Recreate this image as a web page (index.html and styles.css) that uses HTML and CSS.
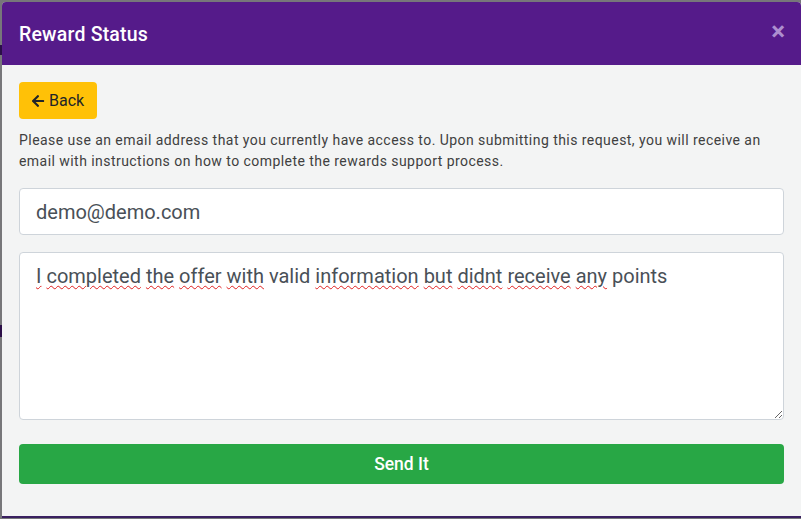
FILE: index.html
```html
<!DOCTYPE html>
<html lang="en">
<head>
<meta charset="utf-8">
<title>Reward Status</title>
<link rel="stylesheet" href="styles.css">
</head>
<body>
<div class="backdrop-strip strip-a"></div>
<div class="backdrop-strip strip-b"></div>
<div class="modal">
  <div class="modal-header">
    <h5 class="modal-title">Reward Status</h5>
    <span class="close" aria-label="Close">&times;</span>
  </div>
  <div class="modal-body">
    <button class="btn-back" type="button">
      <svg class="arrow" viewBox="0 0 448 512" width="14" height="14" aria-hidden="true"><path fill="currentColor" d="M257.5 445.1l-22.2 22.2c-9.4 9.4-24.6 9.4-33.9 0L7 273c-9.4-9.4-9.4-24.6 0-33.9L201.4 44.7c9.4-9.4 24.6-9.4 33.9 0l22.2 22.2c9.5 9.5 9.3 25-.4 34.3L136.6 216H424c13.3 0 24 10.7 24 24v32c0 13.3-10.7 24-24 24H136.6l120.5 114.8c9.8 9.3 10 24.8.4 34.3z"/></svg>
      <span>Back</span>
    </button>
    <p class="info">Please use an email address that you currently have access to. Upon submitting this request, you will receive an email with instructions on how to complete the rewards support process.</p>
    <input class="field" type="email" value="demo@demo.com">
    <div class="field area" role="textbox"><span class="sp">I</span> <span class="sp">completed</span> <span class="sp">the</span> <span class="sp">offer</span> <span class="sp">with</span> valid <span class="sp">information</span> <span class="sp">but</span> <span class="sp">didnt</span> <span class="sp">receive</span> <span class="sp">any</span> points</div>
    <button class="btn-send" type="button">Send It</button>
  </div>
</div>
</body>
</html>
```
FILE: styles.css
```css
html, body {
  margin: 0;
  padding: 0;
}
body {
  width: 801px;
  height: 519px;
  background: #77777a;
  font-family: Roboto, "Liberation Sans", Arial, sans-serif;
  position: relative;
  overflow: hidden;
}
.backdrop-strip {
  position: absolute;
  left: 0;
  width: 3px;
  background: #2b0f48;
}
.strip-a { top: 45px; height: 10px; }
.strip-b { top: 325px; height: 12px; }
.modal {
  position: absolute;
  left: 2px;
  top: 2px;
  width: 799px;
  height: 514px;
  background: #f3f4f4;
  border-radius: 4px 4px 0 0;
  border-bottom: 2px solid #3a2060;
  overflow: hidden;
}
.modal-header {
  height: 63px;
  background: #551b8a;
  display: flex;
  align-items: center;
  justify-content: space-between;
  padding: 0 17px;
  box-sizing: border-box;
}
.modal-title {
  margin: 0;
  color: #fff;
  font-size: 19.5px;
  font-weight: 500;
  letter-spacing: 0.2px;
  padding-top: 1px;
}
.close {
  color: #ad8fcf;
  font-size: 26px;
  font-weight: 700;
  line-height: 1;
  margin-right: -1px;
  margin-top: -6px;
}
.modal-body {
  padding: 17px 17px 0 17px;
  display: flex;
  flex-direction: column;
  align-items: flex-start;
}
.btn-back {
  background: #ffc107;
  border: 0;
  border-radius: 4px;
  height: 37px;
  width: 78px;
  padding: 0 12px;
  display: flex;
  align-items: center;
  gap: 4px;
  font-family: inherit;
  font-size: 16px;
  color: #212529;
}
.arrow { display: block; }
.info {
  margin: 11px 0 16px 0;
  font-size: 14px;
  line-height: 21px;
  letter-spacing: 0.45px;
  color: #404040;
}
.field {
  box-sizing: border-box;
  width: 765px;
  background: #fff;
  border: 1px solid #ced4da;
  border-radius: 4px;
  font-family: inherit;
  font-size: 20px;
  color: #495057;
  margin: 0;
}
input.field {
  height: 47px;
  padding: 0 16px;
  outline: none;
}
.area {
  margin-top: 17px;
  height: 168px;
  padding: 9px 16px;
  line-height: 28px;
  resize: vertical;
  overflow: auto;
}
.sp {
  text-decoration: underline wavy #e02020;
  text-decoration-thickness: 1px;
  text-underline-offset: 2px;
}
.btn-send {
  margin-top: 24px;
  width: 765px;
  height: 40px;
  background: #28a745;
  border: 0;
  border-radius: 4px;
  color: #fff;
  font-family: inherit;
  font-size: 17.5px;
  font-weight: 500;
}
```
